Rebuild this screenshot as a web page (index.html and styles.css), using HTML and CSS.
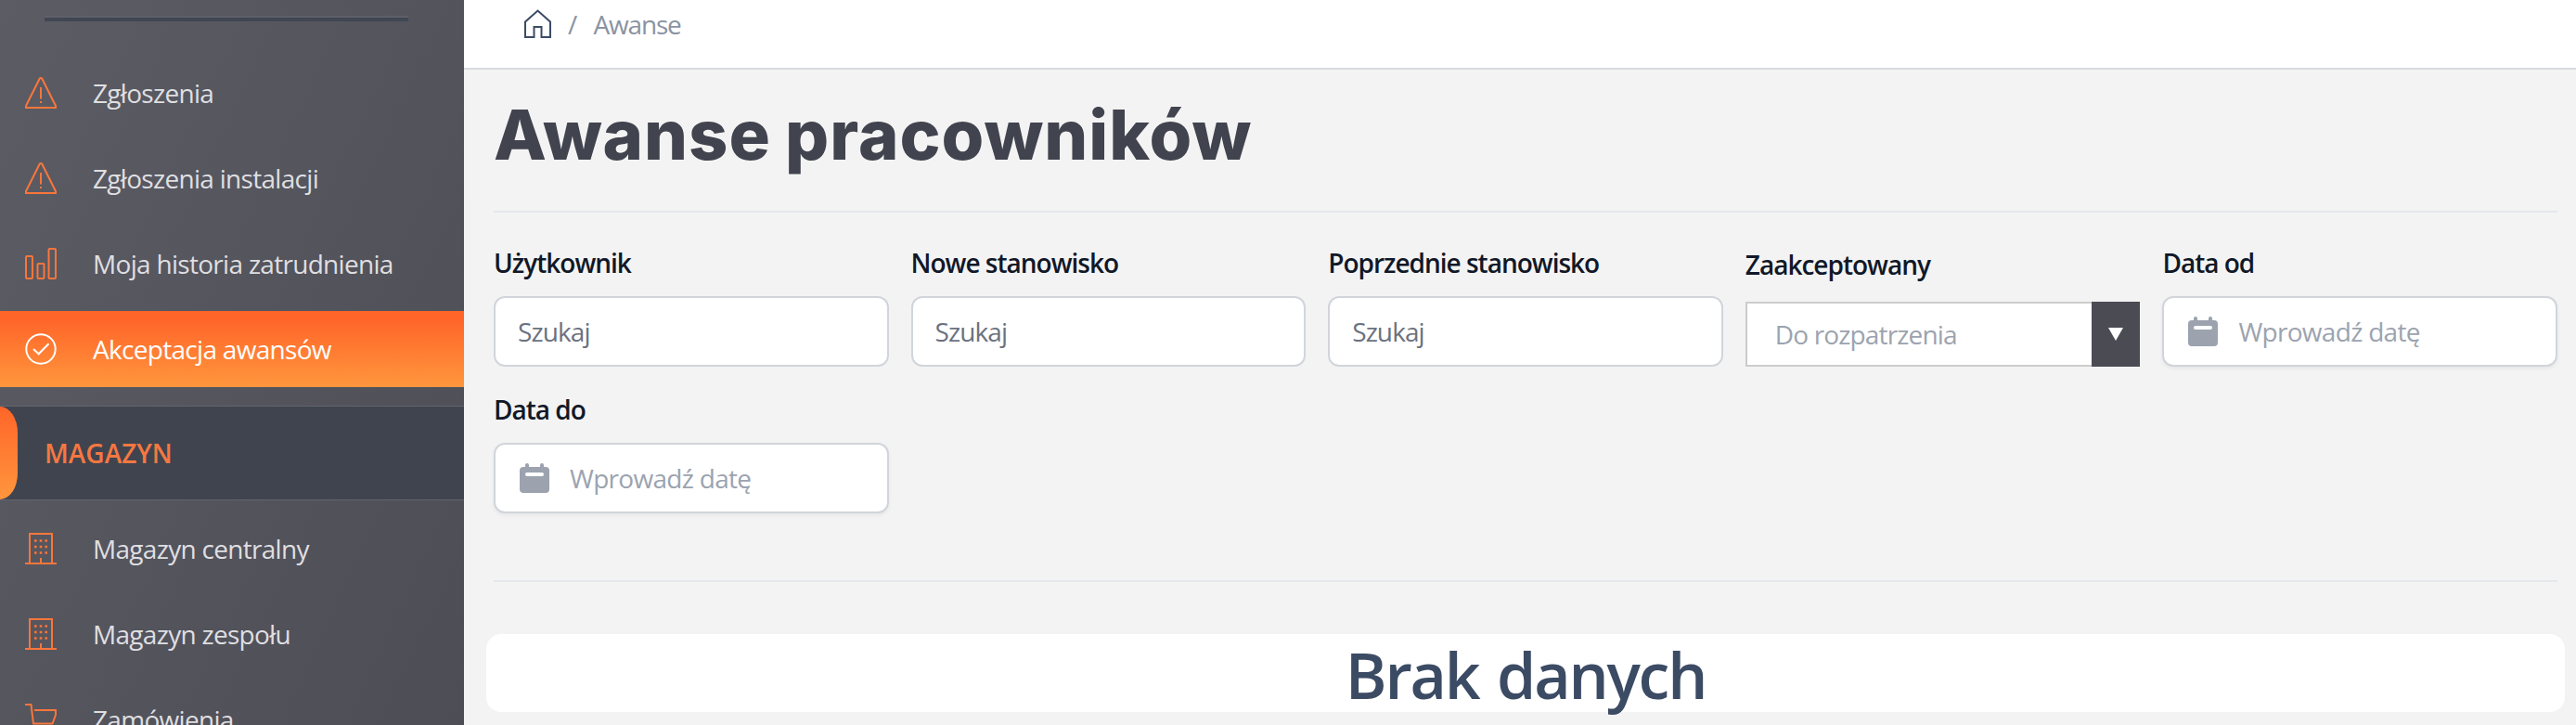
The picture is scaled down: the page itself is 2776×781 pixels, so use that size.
FILE: index.html
```html
<!DOCTYPE html>
<html lang="pl">
<head>
	<meta charset="utf-8">
	<title>Awanse pracowników</title>
	<link rel="stylesheet" href="styles.css">
</head>
<body>
	<!-- icons shared by the menu and the form -->
	<svg class="sprite">
		<symbol id="warning" viewBox="0 0 34 34">
			<path d="M1 33V31L15.8 1.5Q17 .5 18.2 1.5L33 31V33Z"/>
			<path d="M17 11V23.5M17 26V28"/>
		</symbol>
		<symbol id="chart" viewBox="0 0 34 34">
			<rect x="1" y="9" width="7" height="24" rx="1"/>
			<rect x="13.5" y="17" width="7" height="16" rx="1"/>
			<rect x="25.5" y="1" width="7.5" height="32" rx="1"/>
		</symbol>
		<symbol id="check" viewBox="0 0 34 34">
			<circle cx="17" cy="17" r="15.7"/>
			<path d="M9 17L14.7 22.3L25.5 11.3"/>
		</symbol>
		<symbol id="building" viewBox="0 0 34 34">
			<path d="M0 33H34M5 33V1H29V33M17 33V27"/>
			<path d="M10 8.5H24M10 15H24M10 21.5H24" stroke-width="2.6" stroke-dasharray="2.6 3.1"/>
		</symbol>
		<symbol id="cart" viewBox="0 0 34 34">
			<path d="M0 1H6.5L9 21.5H29.5L33 12V7H10"/>
			<circle cx="11" cy="29" r="3"/>
			<circle cx="28" cy="29" r="3"/>
		</symbol>
		<symbol id="calendar" viewBox="0 0 32 32">
			<path fill-rule="evenodd" d="M8 0a2 2 0 0 1 2 2v2h12V2a2 2 0 0 1 4 0v2h2a4 4 0 0 1 4 4v20a4 4 0 0 1-4 4H4a4 4 0 0 1-4-4V8a4 4 0 0 1 4-4h2V2a2 2 0 0 1 2-2zM8 10a2 2 0 0 0 0 4h16a2 2 0 0 0 0-4z"/>
		</symbol>
	</svg>

	<nav class="sidebar">
		<div class="sidebar-line"></div>
		<a class="nav-item"><svg class="icon"><use href="#warning"/></svg>Zgłoszenia</a>
		<a class="nav-item"><svg class="icon"><use href="#warning"/></svg>Zgłoszenia instalacji</a>
		<a class="nav-item"><svg class="icon"><use href="#chart"/></svg>Moja historia zatrudnienia</a>
		<a class="nav-item active"><svg class="icon"><use href="#check"/></svg>Akceptacja awansów</a>
		<div class="nav-section">MAGAZYN</div>
		<a class="nav-item"><svg class="icon"><use href="#building"/></svg>Magazyn centralny</a>
		<a class="nav-item"><svg class="icon"><use href="#building"/></svg>Magazyn zespołu</a>
		<a class="nav-item"><svg class="icon"><use href="#cart"/></svg>Zamówienia</a>
	</nav>

	<main class="main">
		<div class="breadcrumb">
			<svg class="home" viewBox="0 0 30 32"><path d="M1 30V13.5L14.5 1.5L28 13.5V30H18.5V19H10.5V30Z"/></svg>
			<span class="slash">/</span>
			<span class="crumb">Awanse</span>
		</div>

		<div class="content">
			<h1>Awanse pracowników</h1>

			<form class="filters">
				<div class="field">
					<label>Użytkownik</label>
					<div class="input">Szukaj</div>
				</div>
				<div class="field">
					<label>Nowe stanowisko</label>
					<div class="input">Szukaj</div>
				</div>
				<div class="field">
					<label>Poprzednie stanowisko</label>
					<div class="input">Szukaj</div>
				</div>
				<div class="field field-select">
					<label>Zaakceptowany</label>
					<div class="select">
						<span>Do rozpatrzenia</span>
						<div class="arrow"><svg width="16" height="14"><path d="M0 0H16L8 14Z"/></svg></div>
					</div>
				</div>
				<div class="field">
					<label>Data od</label>
					<div class="input date"><svg class="calendar"><use href="#calendar"/></svg>Wprowadź datę</div>
				</div>
				<div class="field">
					<label>Data do</label>
					<div class="input date"><svg class="calendar"><use href="#calendar"/></svg>Wprowadź datę</div>
				</div>
			</form>

			<div class="empty">Brak danych</div>
		</div>
	</main>
</body>
</html>
```
FILE: styles.css
```css
* {
	box-sizing: border-box;
}
body {
	margin: 0;
	height: 781px;
	display: flex;
	overflow: hidden;
	font-family: "Open Sans", "Noto Sans", sans-serif;
	font-size: 28px;
	line-height: 40px;
	letter-spacing: -0.7px;
	background-color: #f3f3f3;
}
.sprite {
	display: none;
}

/* sidebar */
.sidebar {
	width: 500px;
	height: 781px;
	flex: none;
	overflow: hidden;
	padding-top: 17px;
	background: linear-gradient(115deg, #5c5c65, #4d4d56);
}
.sidebar-line {
	height: 6px;
	margin: 0 60px 36px 48px;
	border-top: 2px solid #5e5f69;
	background-color: #414752;
}
.nav-item {
	display: flex;
	align-items: center;
	height: 82px;
	margin-bottom: 10px;
	padding-left: 27px;
	color: #dfdfe0;
}
.icon {
	width: 34px;
	height: 34px;
	margin-right: 39px;
	fill: none;
	stroke: #f9763b;
	stroke-width: 2;
}
.active {
	color: #fff;
	background: linear-gradient(#ff6529 10%, #ff963d);
}
.active .icon {
	stroke: #fff;
}
.nav-section {
	display: flex;
	align-items: center;
	height: 102px;
	margin: 20px 0 11px;
	border-top: 1px solid #62646e;
	border-bottom: 1px solid #62646e;
	color: #f57841;
	font-weight: 600;
	letter-spacing: 0;
	background-color: #40444f;
}
.nav-section::before {
	content: "";
	width: 19px;
	height: 100px;
	margin-right: 29px;
	border-radius: 0 19px 19px 0 / 0 28px 28px 0;
	background: linear-gradient(#ff6529, #ff963d);
}

/* top bar */
.main {
	flex: 1;
}
.breadcrumb {
	display: flex;
	align-items: center;
	height: 75px;
	padding: 0 0 21px 65px;
	border-bottom: 2px solid #d8dbe0;
	color: #8a93a2;
	background-color: #fff;
}
.home {
	width: 30px;
	height: 32px;
	fill: none;
	stroke: #3c4b64;
	stroke-width: 2;
}
.slash {
	margin: 0 18px 0 17px;
}
.crumb {
	letter-spacing: -1.2px;
}

/* page */
.content {
	padding: 24px 20px 0 32px;
}
h1 {
	height: 130px;
	margin: 0;
	border-bottom: 2px solid #e5e7eb;
	font-family: Inter, "Open Sans", sans-serif;
	font-size: 74px;
	font-weight: 800;
	line-height: 92px;
	letter-spacing: 1px;
	word-spacing: -2px;
	color: #41434e;
}
.filters {
	display: grid;
	grid-template-columns: repeat(5, 425.6px);
	column-gap: 24px;
	row-gap: 26px;
	height: 398px;
	align-content: start;
	padding-top: 34px;
	border-bottom: 2px solid #e5e7eb;
}
.field label {
	display: block;
	margin-bottom: 16px;
	color: #111827;
	font-weight: 600;
	letter-spacing: -1px;
}
.input {
	display: flex;
	align-items: center;
	height: 76px;
	padding-left: 24px;
	border: 2px solid #d1d5db;
	border-radius: 12px;
	letter-spacing: -0.9px;
	color: #6b7280;
	background-color: #fff;
}
.date {
	padding-left: 26px;
	letter-spacing: -0.7px;
	color: #9ca3af;
	box-shadow: 0 2px 4px rgba(0, 0, 0, 0.06);
}
.calendar {
	width: 32px;
	height: 32px;
	margin-right: 22px;
	fill: #9ca3af;
}
.field-select label {
	padding-top: 2px;
	margin-bottom: 20px;
}
.select {
	display: flex;
	align-items: center;
	justify-content: space-between;
	height: 70px;
	padding-left: 30px;
	border: 2px solid #ccc;
	border-right: 0;
	letter-spacing: -0.85px;
	color: #9ca3af;
	background-color: #fff;
}
.arrow {
	display: flex;
	align-items: center;
	justify-content: center;
	flex: none;
	width: 52px;
	height: 70px;
	background-color: #4b4b54;
	fill: #fff;
}
.empty {
	height: 84px;
	margin: 56px -8px 0;
	border-radius: 16px;
	text-align: center;
	font-size: 68px;
	font-weight: 600;
	line-height: 88px;
	letter-spacing: -2.2px;
	word-spacing: 4px;
	color: #3c4b64;
	background-color: #fff;
}
```
